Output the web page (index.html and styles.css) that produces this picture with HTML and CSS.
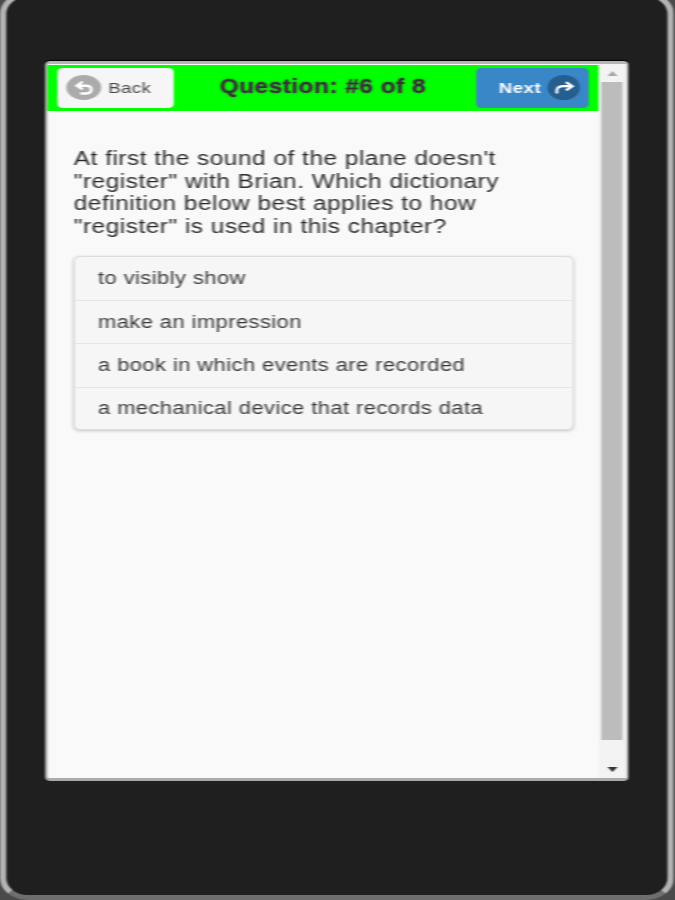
FILE: index.html
```html
<!DOCTYPE html>
<html lang="en">
<head>
    <meta charset="UTF-8">
    <meta name="viewport" content="width=device-width, initial-scale=1.0">
    <title>Question #6 of 8</title>
    <link rel="stylesheet" href="styles.css">
</head>
<body>
    <div class="device">
        <div class="screen">
            <div class="page">
                <div class="header">
                    <button class="nav-btn back-btn">
                        <span class="icon-circle back-icon">
                            <svg width="22" height="22" viewBox="0 0 24 24"><path d="M11 5 6 9.5 11 13.5M6.5 9.5H14Q18.5 9.5 18.5 13.5T14 18H9" fill="none" stroke="#fff" stroke-width="2.6"/></svg>
                        </span>
                        Back
                    </button>
                    <h1>Question: #6 of 8</h1>
                    <button class="nav-btn next-btn">
                        Next
                        <span class="icon-circle next-icon">
                            <svg width="22" height="22" viewBox="0 0 24 24"><path d="M14 5.5 19.5 10 14 14.5M19 10H12Q6 10 6 14.5V18" fill="none" stroke="#fff" stroke-width="2.4"/></svg>
                        </span>
                    </button>
                </div>
                <div class="content">
                    <p class="question">At first the sound of the plane doesn't "register" with Brian. Which dictionary definition below best applies to how "register" is used in this chapter?</p>
                    <ul class="answers">
                        <li>to visibly show</li>
                        <li>make an impression</li>
                        <li>a book in which events are recorded</li>
                        <li>a mechanical device that records data</li>
                    </ul>
                </div>
            </div>
            <div class="scrollbar">
                <span class="arrow arrow-up"></span>
                <div class="track"><div class="thumb"></div></div>
                <span class="arrow arrow-down"></span>
            </div>
        </div>
    </div>
</body>
</html>
```

FILE: styles.css
```css
html, body {
    margin: 0;
    height: 100%;
    overflow: hidden;
    background-color: #4a4a4a;
}

/* the whole thing is a 540 wide page stretched out to 675 */
.device {
    box-sizing: border-box;
    width: 539px;
    height: 908px;
    margin-top: -8px;
    padding: 64px 0 0 31px;
    background-color: #1f1f1f;
    border: 5px solid #b4b4b4;
    border-bottom-color: #6e6e6e;
    border-radius: 22px;
    transform: scaleX(1.25);
    transform-origin: left top;
    filter: blur(0.7px);
}

.screen {
    display: flex;
    width: 467px;
    height: 720px;
    box-sizing: border-box;
    background-color: #f9f9f9;
    border: 3px solid #aaa;
    border-left-width: 2px;
    border-right-width: 2px;
    border-top-color: #b5b5b5;
    border-right-color: #c4c4c4;
    border-radius: 4px;
    box-shadow: 0 -1px 1px #000;
    font-family: "Liberation Sans", Arial, sans-serif;
}

.page {
    flex: 1;
    min-width: 0;
    padding-top: 1px;
}

.header {
    display: flex;
    align-items: center;
    justify-content: space-between;
    height: 46px;
    padding: 0 7.5px;
    background-color: #00ff00;
}

.header h1 {
    margin: 0 0 3px -3px;
    font-size: 19.5px;
    font-weight: bold;
    letter-spacing: 0.4px;
    color: #333;
    text-shadow: 0 0 2px #555;
}

.nav-btn {
    display: flex;
    align-items: center;
    height: 40px;
    padding-bottom: 2px;
    border: none;
    border-radius: 4px;
    font-family: inherit;
    font-size: 15px;
    letter-spacing: 0.3px;
}

.back-btn {
    width: 93px;
    padding-left: 7px;
    padding-right: 0;
    gap: 6px;
    background-color: #f6f6f6;
    color: #444;
}

.next-btn {
    width: 90px;
    padding-left: 18px;
    padding-right: 7px;
    gap: 5px;
    background-color: #3a87c8;
    color: #fff;
    font-weight: bold;
}

.icon-circle {
    display: flex;
    align-items: center;
    justify-content: center;
    width: 28px;
    height: 25px;
    border-radius: 50%;
}

.back-icon {
    background-color: #ababab;
}

.next-icon {
    background-color: #255f90;
}

.content {
    padding: 36px 20px 0 21px;
}

.question {
    margin: 0 0 19px;
    font-size: 19.5px;
    line-height: 22.5px;
    letter-spacing: 0.42px;
    color: #2c2c2c;
}

.answers {
    margin: 0;
    padding: 0;
    list-style: none;
    border: 1px solid #ddd;
    border-radius: 5px;
    box-shadow: 0 1px 3px rgba(0, 0, 0, 0.2);
    background-color: #f6f6f6;
}

.answers li {
    height: 43.5px;
    box-sizing: border-box;
    padding: 0 18.4px;
    line-height: 42px;
    border-bottom: 1px solid #e6e6e6;
    font-size: 17.5px;
    letter-spacing: 0.36px;
    color: #3a3a3a;
}

.answers li:last-child {
    height: 41px;
    line-height: 41px;
    border-bottom: none;
}

.scrollbar {
    display: flex;
    flex-direction: column;
    align-items: center;
    width: 22.4px;
    background-color: #f3f3f3;
}

.arrow {
    width: 0;
    height: 0;
    margin: 6.5px 0;
    border-left: 4.4px solid transparent;
    border-right: 4.4px solid transparent;
}

.arrow-up {
    border-bottom: 5px solid #a8a8a8;
}

.arrow-down {
    border-top: 5px solid #333;
}

.track {
    flex: 1;
    width: 17px;
}

.thumb {
    height: 97%;
    background-color: #bcbcbc;
}
```
